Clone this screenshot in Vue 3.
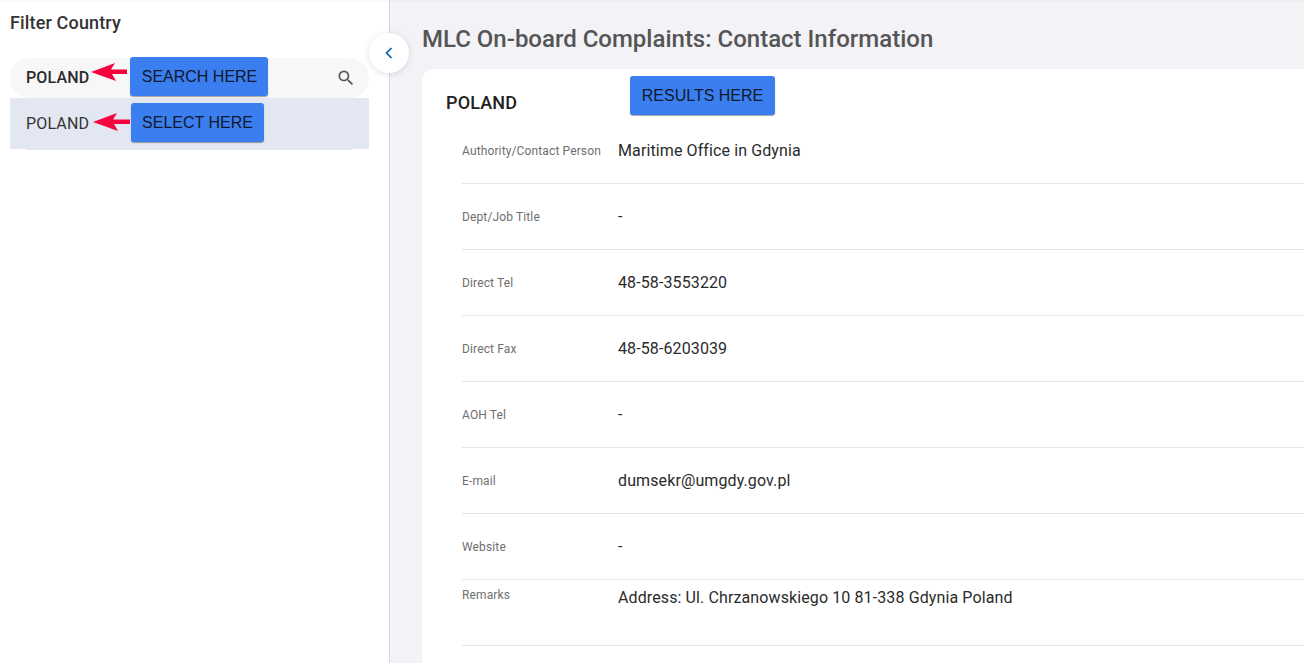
<script setup>
const rows = [
  { label: 'Authority/Contact Person', value: 'Maritime Office in Gdynia' },
  { label: 'Dept/Job Title', value: '-' },
  { label: 'Direct Tel', value: '48-58-3553220' },
  { label: 'Direct Fax', value: '48-58-6203039' },
  { label: 'AOH Tel', value: '-' },
  { label: 'E-mail', value: 'dumsekr@umgdy.gov.pl' },
  { label: 'Website', value: '-' }
]
</script>

<template>
  <div class="page">
    <aside class="sidebar">
      <h2 class="filter-title">Filter Country</h2>
      <div class="search">
        <span class="search-text">POLAND</span>
        <svg class="search-icon" viewBox="0 0 24 24" width="20" height="20">
          <path fill="#555" d="M15.5 14h-.79l-.28-.27A6.47 6.47 0 0 0 16 9.5 6.5 6.5 0 1 0 9.5 16c1.61 0 3.09-.59 4.23-1.57l.27.28v.79l5 4.99L20.49 19l-4.99-5zm-6 0C7.01 14 5 11.99 5 9.5S7.01 5 9.5 5 14 7.01 14 9.5 11.99 14 9.5 14z" />
        </svg>
      </div>
      <div class="country-item">POLAND</div>
      <div class="item-line"></div>
      <button class="collapse">
        <svg viewBox="0 0 24 24" width="24" height="24">
          <path fill="none" stroke="#0b5fa5" stroke-width="1.7" d="M14.5 7 9.5 12l5 5" />
        </svg>
      </button>
    </aside>

    <main class="content">
      <h1 class="page-title">MLC On-board Complaints: Contact Information</h1>
      <section class="card">
        <h3 class="card-title">POLAND</h3>
        <div class="rows">
          <div v-for="row in rows" :key="row.label" class="row">
            <span class="label">{{ row.label }}</span>
            <span class="value">{{ row.value }}</span>
          </div>
          <div class="row row-top">
            <span class="label">Remarks</span>
            <span class="value">Address: Ul. Chrzanowskiego 10 81-338 Gdynia Poland</span>
          </div>
        </div>
      </section>
    </main>

    <!-- annotations pasted on top of the screenshot -->
    <div class="note note-search">SEARCH HERE</div>
    <div class="note note-select">SELECT HERE</div>
    <div class="note note-results">RESULTS HERE</div>
    <svg class="arrow arrow-search" viewBox="0 0 38 18" width="38" height="18">
      <path fill="#f5033f" d="M0 9 24 0l-4 6.5h16V11H21l4 7z" />
    </svg>
    <svg class="arrow arrow-select" viewBox="0 0 38 18" width="38" height="18">
      <path fill="#f5033f" d="M0 9 24 0l-4 6.5h17V11H21l4 7z" />
    </svg>
  </div>
</template>

<style scoped>
.page {
  position: relative;
  display: flex;
  width: 1304px;
  height: 663px;
  overflow: hidden;
  font-family: Roboto, "Liberation Sans", sans-serif;
  background: #f2f2f7;
}

.page::before {
  content: "";
  position: absolute;
  top: 0;
  left: 0;
  right: 0;
  height: 2px;
  z-index: 1;
  background: rgba(0, 0, 0, 0.025);
}

.sidebar {
  position: relative;
  flex: 0 0 390px;
  box-sizing: border-box;
  padding: 12px 20px 0 10px;
  background: #fff;
  border-right: 1px solid #d9d9de;
}

.filter-title {
  margin: 0 0 25px;
  font-size: 18px;
  line-height: 21px;
  font-weight: 500;
  letter-spacing: 0.15px;
  color: #333;
}

.search {
  display: flex;
  align-items: center;
  justify-content: space-between;
  height: 40px;
  padding: 0 13px 0 16px;
  background: #f7f7f7;
  border-radius: 20px;
}

.search-text {
  font-size: 16px;
  font-weight: 500;
  letter-spacing: 0.15px;
  color: #2b2b2b;
  position: relative;
  top: -1px;
}

.country-item {
  box-sizing: border-box;
  height: 51px;
  padding: 0 16px;
  line-height: 52px;
  font-size: 16px;
  letter-spacing: 0.15px;
  color: #333;
  background: #e3e7f2;
}

.item-line {
  height: 1px;
  margin: 0 16px;
  background: #e3e7f2;
}

.collapse {
  position: absolute;
  top: 33px;
  left: 369px;
  display: flex;
  align-items: center;
  justify-content: center;
  width: 40px;
  height: 40px;
  padding: 0;
  background: #fff;
  border: none;
  border-radius: 50%;
  box-shadow: 0 1px 6px rgba(0, 0, 0, 0.12);
}

.content {
  flex: 1;
  min-width: 0;
  padding: 25px 0 0 32px;
}

.page-title {
  margin: 0 0 15px;
  font-size: 24px;
  line-height: 29px;
  font-weight: 500;
  color: #555;
  white-space: nowrap;
}

.card {
  height: 640px;
  padding: 24px 0 0 24px;
  background: #fff;
  border-radius: 12px 0 0 0;
}

.card-title {
  margin: 0 0 5px;
  font-size: 18px;
  line-height: 20px;
  font-weight: 500;
  letter-spacing: 0.15px;
  color: #222;
}

.rows {
  margin-left: 16px;
}

.row {
  display: flex;
  align-items: center;
  box-sizing: border-box;
  height: 66px;
  border-bottom: 1px solid #e5e5e5;
}

.row-top {
  align-items: flex-start;
}

.row-top .label {
  margin-top: 8px;
}

.row-top .value {
  margin-top: 8px;
}

.label {
  flex: 0 0 156px;
  font-size: 12px;
  letter-spacing: 0.13px;
  color: #6f6f6f;
}

.value {
  font-size: 16px;
  letter-spacing: 0.11px;
  color: #2b2b2b;
}

.note {
  position: absolute;
  box-sizing: border-box;
  display: flex;
  align-items: center;
  justify-content: center;
  height: 39px;
  font-family: "Liberation Sans", Arial, sans-serif;
  font-size: 16px;
  color: #10192b;
  background: #3b7eef;
  border-radius: 3px;
  box-shadow: 0 1px 1px rgba(0, 0, 0, 0.35);
}

.note-search {
  top: 57px;
  left: 130px;
  width: 138px;
  padding-left: 1px;
}

.note-select {
  top: 103px;
  left: 131px;
  width: 133px;
}

.note-results {
  top: 76px;
  left: 630px;
  width: 145px;
}

.arrow {
  position: absolute;
}

.arrow-search {
  top: 63px;
  left: 91px;
}

.arrow-select {
  top: 113px;
  left: 93px;
}
</style>

<style>
body {
  margin: 0;
}
</style>
